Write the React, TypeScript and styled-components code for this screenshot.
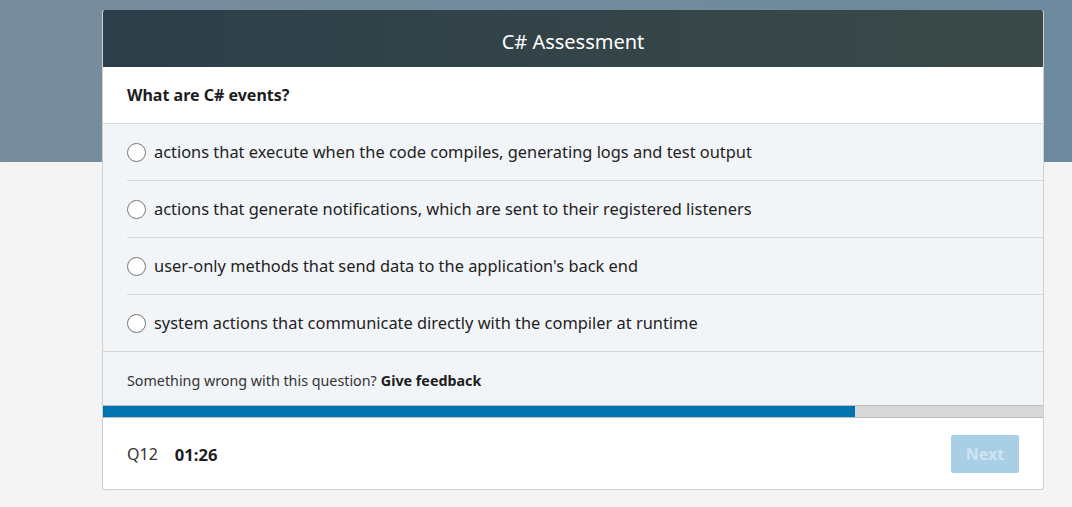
import React from "react";
import styled, { createGlobalStyle } from "styled-components";

const GlobalStyle = createGlobalStyle`
  html, body {
    margin: 0;
    padding: 0;
    background: #f4f4f4;
    font-family: "Noto Sans", "Open Sans", Arial, sans-serif;
    color: #1d1d1d;
  }
`;

const Page = styled.div`
  min-height: 507px;
  background: linear-gradient(90deg, #788c9b 0%, #6c8a9e 100%) top / 100% 162px no-repeat, #f4f4f4;
  padding: 10px 0 0 102px;
  box-sizing: border-box;
`;

const Card = styled.div`
  width: 942px;
  box-sizing: border-box;
  border: 1px solid #d0d0d0;
  border-top: none;
  border-radius: 3px;
  overflow: hidden;
  background: #fff;
`;

const Header = styled.div`
  height: 57px;
  box-sizing: border-box;
  padding-top: 5px;
  display: flex;
  align-items: center;
  justify-content: center;
  background: linear-gradient(90deg, #2c3e49 0%, #3b4a48 100%);
  color: #fff;
  font-size: 20px;
`;

const Question = styled.div`
  height: 56px;
  display: flex;
  align-items: center;
  padding-left: 24px;
  font-size: 16px;
  font-weight: 700;
  border-bottom: 1px solid #d8d8d8;
`;

const Options = styled.div`
  background: #f2f5f8;
  padding-left: 24px;
  border-bottom: 1px solid #d8d8d8;
`;

const Option = styled.label`
  height: 56px;
  box-sizing: border-box;
  padding-bottom: 1px;
  display: flex;
  align-items: center;
  gap: 8px;
  font-size: 16.4px;
  color: #222;

  & + & {
    height: 57px;
    border-top: 1px solid #d8d8d8;
  }
`;

const Radio = styled.span`
  width: 17px;
  height: 17px;
  border: 1.5px solid #767676;
  border-radius: 50%;
  background: #fff;
  flex-shrink: 0;
  margin-top: 1px;
`;

const Feedback = styled.div`
  height: 53px;
  box-sizing: border-box;
  padding: 3px 0 0 24px;
  display: flex;
  align-items: center;
  background: #f2f5f8;
  font-size: 14.3px;
  color: #333;

  b {
    margin-left: 4px;
    color: #1d1d1d;
  }
`;

const Track = styled.div`
  height: 11px;
  background: #d8d8d8;
  border-top: 1px solid #bcbcbc;
  border-bottom: 1px solid #bcbcbc;
`;

const Fill = styled.div`
  height: 100%;
  background: #0073b1;
`;

const Footer = styled.div`
  height: 70px;
  display: flex;
  align-items: center;
  padding: 1px 24px 0 24px;
  font-size: 16px;
`;

const Counter = styled.span`
  color: #333;
  margin-right: 17px;
`;

const Timer = styled.span`
  font-weight: 700;
  font-size: 16.6px;
`;

const NextButton = styled.button`
  margin-left: auto;
  width: 68px;
  height: 38px;
  border: none;
  border-radius: 2px;
  background: #a8cfe6;
  color: #cfe4f1;
  font-family: inherit;
  font-size: 16px;
  font-weight: 700;
`;

const answers = [
  "actions that execute when the code compiles, generating logs and test output",
  "actions that generate notifications, which are sent to their registered listeners",
  "user-only methods that send data to the application's back end",
  "system actions that communicate directly with the compiler at runtime",
];

export default function App() {
  const progress = (855 - 103) / 940;
  return (
    <>
      <GlobalStyle />
      <Page>
        <Card>
          <Header>C# Assessment</Header>
          <Question>What are C# events?</Question>
          <Options>
            {answers.map((a) => (
              <Option key={a}>
                <Radio />
                {a}
              </Option>
            ))}
          </Options>
          <Feedback>
            Something wrong with this question? <b>Give feedback</b>
          </Feedback>
          <Track>
            <Fill style={{ width: `${progress * 100}%` }} />
          </Track>
          <Footer>
            <Counter>Q12</Counter>
            <Timer>01:26</Timer>
            <NextButton disabled>Next</NextButton>
          </Footer>
        </Card>
      </Page>
    </>
  );
}
